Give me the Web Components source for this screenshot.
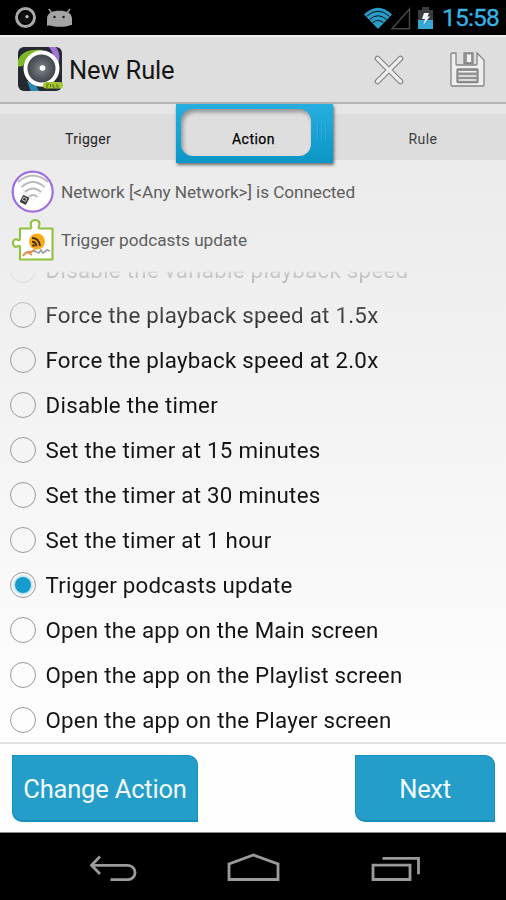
<!DOCTYPE html>
<html lang="en">
<head>
<meta charset="utf-8">
<title>New Rule</title>
<style>
html,body{margin:0;height:100%;background:#fff}
body{font-family:Roboto,"Liberation Sans",sans-serif}
</style>
</head>
<body>
<rule-editor></rule-editor>
<script>
function define(name, html, setup) {
  const tpl = document.createElement('template');
  tpl.innerHTML = html;
  customElements.define(name, class extends HTMLElement {
    connectedCallback() {
      if (this.shadowRoot) return;
      this.attachShadow({ mode: 'open' }).appendChild(tpl.content.cloneNode(true));
      if (setup) setup(this, this.shadowRoot);
    }
  });
}

/* A single line of text whose tracking is adjusted to fill the width in "w". */
define('fit-text', `<style>:host{display:inline-block;white-space:nowrap;line-height:1}</style><span></span>`, (el, root) => {
  const s = root.querySelector('span');
  s.textContent = el.getAttribute('text');
  const w = parseFloat(el.getAttribute('w'));
  const n = s.textContent.length;
  s.style.letterSpacing = ((w - s.getBoundingClientRect().width) / n) + 'px';
});

define('status-bar', `<style>
:host{display:flex;align-items:center;height:35px;background:#000;color:#38b3e3;padding:0 7px 0 14px;box-sizing:border-box}
.gap{flex:1} svg{display:block} fit-text{font-size:24.5px;padding-top:2px;-webkit-text-stroke:.3px #38b3e3}
</style>
<svg width="60" height="35" viewBox="0 0 60 35">
 <circle cx="11.5" cy="17.5" r="9" fill="none" stroke="#a9a9a9" stroke-width="3"/>
 <circle cx="11.5" cy="17.5" r="5.7" fill="#111"/><circle cx="13" cy="16.6" r="1.6" fill="#c4c4c4"/>
 <path d="M34.8 9l3 4M56 9l-3 4" stroke="#a0a0a0" stroke-width="1.5"/>
 <path d="M33 26V19c0-6 5-8.3 12.500-8.300S58 13 58 19v6c-2-.5-2.800 1-5 1.200-4 .8-10 .8-14 0-2-.4-4-1.200-6-.2z" fill="#a4a4a4"/>
 <circle cx="40.500" cy="17" r="1.300" fill="#222"/><circle cx="49.500" cy="17" r="1.300" fill="#222"/>
</svg>
<span class="gap"></span>
<svg width="72" height="35" viewBox="363 0 72 35">
 <path d="M364 14.500Q378 1 392 14.500L378 29z" fill="#2a9bc5"/>
 <path d="M366.500 16.300Q378 6 389.500 16.300M369.500 19.500Q378 12 386.500 19.500M372.500 22.800Q378 18 383.500 22.800" stroke="#02151d" stroke-width="1" fill="none"/>
 <path d="M409.500 9V28.800H392z" fill="none" stroke="#474747" stroke-width="1.500"/>
 <path d="M418 10h4V7h7v3h4v19h-15z" fill="#3b3d3f"/><path d="M418 20h15v9h-15z" fill="#35a7d4"/>
 <path d="M424 13h5l-1.500 3.500h2.500l-6.500 8 1.500-5.500h-3z" fill="#f4fbff"/>
</svg>
<fit-text text="15:58" w="57" style="margin-left:7px"></fit-text>`);

define('app-bar', `<style>
:host{display:flex;align-items:center;height:69px;background:#dedede;box-sizing:border-box;border-top:2px solid #eee;border-bottom:2px solid #b3b3b3;padding:0 21px 0 17px}
svg{display:block}.gap{flex:1} fit-text{font-size:25.500px;color:#161616;margin-left:5px;padding-top:3px}
.x{margin:1px 46.500px 0 0}.s{margin-top:1px}
</style>
<svg width="47" height="46" viewBox="17 46 47 46">
 <defs><clipPath id="c"><rect x="18" y="47" width="44" height="44" rx="6"/></clipPath>
 <radialGradient id="g"><stop offset="0" stop-color="#84898f"/><stop offset=".5" stop-color="#5b6067"/><stop offset="1" stop-color="#3a3e45"/></radialGradient></defs>
 <g clip-path="url(#c)"><rect x="18" y="47" width="44" height="44" fill="#252a32"/>
 <path d="M17 63C20 52 29 49 42 50L42 53C30 54 26 58 23 66L17 67z" fill="#7fb927"/>
 <path d="M48 46h7c6 7 5 15 2 21l-5-4c2-7 1-11-4-17z" fill="#a273d3"/>
 <path d="M27 81l9 4c1 3 2 4 4 7h-9z" fill="#2789b2"/>
 </g>
 <circle cx="41.500" cy="68.500" r="16" fill="url(#g)" stroke="#fff" stroke-width="4"/>
 <path d="M27 76Q32 86 47 85" fill="none" stroke="#fff" stroke-width="3"/>
 <circle cx="42.500" cy="68" r="2.800" fill="#fff"/>
 <rect x="43" y="82" width="20" height="6.500" rx="3" fill="#a7c72e"/>
 <path d="M47 84v4M47 84h2M50.500 84v3M53 84v3h2M57 84v3h2" stroke="#56701a" stroke-width="1" fill="none"/>
</svg>
<fit-text text="New Rule" w="105.500"></fit-text><span class="gap"></span>
<svg class="x" width="30" height="30" viewBox="0 0 30 30"><path d="M3.500 3.500l23 23M26.500 3.500l-23 23" stroke="#858585" stroke-width="5.600" stroke-linecap="round"/><path d="M3.500 3.500l23 23M26.500 3.500l-23 23" stroke="#efefef" stroke-width="3.200" stroke-linecap="round"/></svg>
<svg class="s" width="35" height="36" viewBox="450 52 35 36" fill="#efefef" stroke="#858585" stroke-width="1.300">
 <path d="M453 53h3v11q0 1 1 1h19q1 0 1-1V53l7 7v25q0 1-1 1h-31q-1 0-1-1V54q0-1 2-1z"/>
 <path d="M464 53h9v10.500h-9z" fill="#999"/><path d="M467 54.500h4v7.500h-4z" stroke="none" fill="#f1f1f1"/>
 <rect x="457" y="69" width="21" height="13.500" rx="1" fill="#929292"/>
 <path d="M458.500 71.800h18M458.500 75.900h18M458.500 80h18" stroke="#f1f1f1" stroke-width="1.500"/>
</svg>`);

define('step-tabs', `<style>
:host{display:grid;grid-template-columns:176px 156px 174px;height:61px;background:linear-gradient(#e6e6e6 0 10px,#dcdcdc 10px 56px,#ececec 56px)}
.t{text-align:center;padding-top:27px;font-size:14px;color:#252525}
.t:last-child{padding-left:8px;color:#3c3c3c}.t:first-child{padding-right:6px;margin-left:-6px}
.on{box-sizing:border-box;width:157px;height:59px;background:linear-gradient(#27aee0,#0b96c6);padding:5px 22px 7px 5px;box-shadow:1px 2px 3px rgba(0,0,0,.55);position:relative}
.in{height:47px;background:#dedede;border-radius:12px;box-shadow:inset 2px 3px 4px rgba(0,0,0,.35);box-sizing:border-box;padding:22px 0 0 15px;text-align:center;color:#000;font-size:14px;-webkit-text-stroke:.25px #000}
.grip{position:absolute;right:5px;top:19px;width:11px;height:17px;background:repeating-linear-gradient(90deg,#3bbce8 0 1px,#158fbb 1px 2px,transparent 2px 4px);opacity:.5}
</style>
<div class="t"><fit-text text="Trigger" w="46"></fit-text></div>
<div class="on"><div class="in"><fit-text text="Action" w="43"></fit-text></div><span class="grip"></span></div>
<div class="t"><fit-text text="Rule" w="29"></fit-text></div>`);

define('rule-summary', `<style>
:host{display:block;height:104px;padding-top:3px;box-sizing:border-box}
.r{display:flex;align-items:center;height:48px;padding-left:11px;gap:7px}
fit-text{font-size:17.200px;color:#5e5e5e;padding-top:2px} svg{display:block}
</style>
<div class="r"><svg width="43" height="44" viewBox="11 170 43 44">
 <circle cx="32.700" cy="191.700" r="20" fill="#fff" stroke="#9a70e4" stroke-width="2.200"/>
 <path d="M18 182Q33 169 48 182M21.500 187Q33 177 44.500 187M25 192Q33 185 41 192M28.500 197Q33 193 37.500 197" fill="none" stroke="#b9b9b9" stroke-width="1.700"/>
 <path d="M18 183L33 201 48 183" fill="none" stroke="#d5d5d5" stroke-width=".8" stroke-dasharray="2 2"/>
 <g transform="rotate(28 25 199)"><rect x="21.500" y="196" width="7" height="8" rx="1" fill="#3d3d3d"/><rect x="23" y="198" width="3.500" height="3" fill="none" stroke="#ddd" stroke-width=".8"/></g>
</svg><fit-text text="Network [&lt;Any Network&gt;] is Connected" w="294"></fit-text></div>
<div class="r"><svg width="43" height="46" viewBox="11 217 43 46">
 <path d="M20 228.500h10.500q1.500-.5.500-2.500c-2.500-8 11-8 8 0-1 2-.5 2.500 1 2.500h12.500v31H20v-12c0-2-1-2-2.500-1-6 2.500-6-9-.5-7 2 1 3 1 3-1z" fill="#fff" stroke="#8fc13d" stroke-width="2.100" stroke-linejoin="round"/>
 <circle cx="37" cy="241.500" r="8" fill="#f9aa18"/>
 <path d="M32 238q7 0 8 8M32 241.800q4 0 4.500 4.500" stroke="#473216" stroke-width="1.900" fill="none"/><circle cx="33.500" cy="245.500" r="1.300" fill="#473216"/>
 <path d="M23 256q3-5 8-4l4-2M27 252l5 3" stroke="#dd8f4a" stroke-width="2" fill="none"/>
 <path d="M34 251l5 2 2-3 2 3 4-3 3 1" stroke="#9ba0a6" stroke-width="1.700" fill="none"/>
</svg><fit-text text="Trigger podcasts update" w="186"></fit-text></div>`);

define('radio-row', `<style>
:host{display:flex;align-items:center;height:45px;flex:none;padding-left:10px;gap:9.500px;color:#141414}
i{box-sizing:border-box;width:26px;height:26px;border:1.500px solid #999;border-radius:50%;display:flex;align-items:center;justify-content:center}
b{width:16px;height:16px;border-radius:50%}
:host([checked]) b{background:#169bcd;box-shadow:0 0 0 2px #c9e8f3}
fit-text{font-size:22.300px;padding-top:2px}
</style><i><b></b></i>`, (el, root) => {
  const t = document.createElement('fit-text');
  t.setAttribute('text', el.getAttribute('label'));
  t.setAttribute('w', el.getAttribute('w'));
  root.appendChild(t);
});

define('action-list', `<style>
:host{display:flex;flex-direction:column;justify-content:flex-end;height:495px;margin-top:-21px;overflow:hidden;
-webkit-mask-image:linear-gradient(transparent 23px,rgba(0,0,0,.16) 25px,rgba(0,0,0,.28) 37px,rgba(0,0,0,.78) 65px,rgba(0,0,0,.9) 79px,#000 98px);mask-image:linear-gradient(transparent 23px,rgba(0,0,0,.16) 25px,rgba(0,0,0,.28) 37px,rgba(0,0,0,.78) 65px,rgba(0,0,0,.9) 79px,#000 98px)}
</style>
<radio-row label="Disable the variable playback speed" w="363"></radio-row>
<radio-row label="Force the playback speed at 1.5x" w="333"></radio-row>
<radio-row label="Force the playback speed at 2.0x" w="333"></radio-row>
<radio-row label="Disable the timer" w="172.500"></radio-row>
<radio-row label="Set the timer at 15 minutes" w="275"></radio-row>
<radio-row label="Set the timer at 30 minutes" w="275"></radio-row>
<radio-row label="Set the timer at 1 hour" w="226"></radio-row>
<radio-row checked label="Trigger podcasts update" w="247"></radio-row>
<radio-row label="Open the app on the Main screen" w="333"></radio-row>
<radio-row label="Open the app on the Playlist screen" w="357"></radio-row>
<radio-row label="Open the app on the Player screen" w="346"></radio-row>`);

define('push-button', `<style>
:host{display:grid;place-items:center;height:67px;box-sizing:border-box;background:#249ec9;border:1px solid #1690bc;border-bottom-width:2px;border-radius:0 10px 0 10px;color:#f2fbff;font-size:25.500px}
slot{display:block}
</style><slot></slot>`);

define('button-bar', `<style>
:host{display:flex;justify-content:space-between;align-items:flex-start;height:91px;box-sizing:border-box;background:#fefefe;border-top:2px solid #e2e2e2;border-bottom:1px solid #8b8b8b;padding:11px 11px 0 12px}
fit-text{padding-top:4px}
</style>
<push-button style="width:186px"><fit-text text="Change Action" w="163.500"></fit-text></push-button>
<push-button style="width:140px"><fit-text text="Next" w="51.500"></fit-text></push-button>`);

define('nav-bar', `<style>
:host{display:block;height:67px;background:#000} svg{display:block}
</style>
<svg width="506" height="67" viewBox="0 833 506 67" fill="none" stroke="#9b9b9b" stroke-width="2.800">
 <path d="M100 856.500L91.500 865.300 100 874M92 865.300H128a6.900 7 0 0 1 0 14.300H110.500"/>
 <path d="M229 879.500V864L253.500 855 278 864V879.500z"/>
 <path d="M373 865.200h37v14.300h-37zM382.500 858.300h36v16"/>
</svg>`);

define('rule-editor', `<style>
:host{display:flex;flex-direction:column;width:506px;height:900px;overflow:hidden;background:linear-gradient(#ebebeb 160px,#eee 260px,#fefefe 735px)}
</style>
<status-bar></status-bar><app-bar></app-bar><step-tabs></step-tabs><rule-summary></rule-summary><action-list></action-list><button-bar></button-bar><nav-bar></nav-bar>`);
</script>
</body>
</html>
